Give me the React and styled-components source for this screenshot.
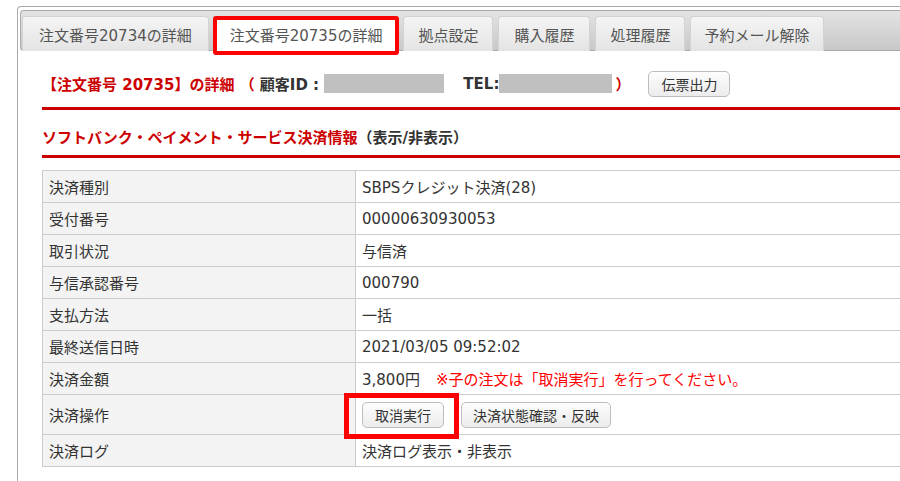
import React from 'react';
import styled, { createGlobalStyle } from 'styled-components';

const GlobalStyle = createGlobalStyle`
  html, body {
    margin: 0;
    padding: 0;
    background: #fff;
    overflow: hidden;
  }
  body {
    font-family: "DejaVu Sans", "Noto Sans CJK JP", sans-serif;
    color: #333;
  }
`;

const Page = styled.div`
  padding: 6px 0 0 17px;
  height: 481px;
  box-sizing: border-box;
`;

const Panel = styled.div`
  border: 1px solid #aaa;
  border-right: none;
  border-bottom: none;
  border-radius: 4px 0 0 0;
  padding: 3px 0 0 2px;
  height: 100%;
  box-sizing: border-box;
`;

const TabBar = styled.div`
  display: flex;
  gap: 5px;
  height: 41px;
  box-sizing: border-box;
  padding: 5px 0 0 1px;
  border: 1px solid #aaa;
  border-right: none;
  border-radius: 4px 0 0 4px;
  background: linear-gradient(#e3e3e3, #c8c8c8);
`;

const Tab = styled.div`
  position: relative;
  height: 35px;
  box-sizing: border-box;
  padding: 0 ${p => p.$pad || 15}px;
  display: flex;
  align-items: center;
  font-size: 15px;
  color: #555;
  border: 1px solid #d3d3d3;
  border-bottom: none;
  border-radius: 4px 4px 0 0;
  background: ${p => (p.$active ? '#fff' : 'linear-gradient(#f4f4f4, #e4e4e4)')};
  white-space: nowrap;

  ${p =>
    p.$active &&
    `
    &::after {
      content: '';
      position: absolute;
      left: -2px;
      right: -2px;
      top: -1px;
      bottom: -4px;
      border: 4px solid #ff0000;
      border-radius: 3px;
    }
  `}
`;

const Content = styled.div`
  padding: 0 0 0 22px;
`;

const Header = styled.div`
  display: flex;
  align-items: center;
  height: 59px;
  padding-top: 9px;
  box-sizing: border-box;
  border-bottom: 3px solid #cc0000;
`;

const Title = styled.span`
  font-size: 15px;
  font-weight: bold;
  color: ${p => p.$color || '#cc0000'};
  margin-left: ${p => p.$ml || 0}px;
  white-space: nowrap;
`;

const Masked = styled.span`
  display: inline-block;
  width: ${p => p.$w}px;
  height: 19px;
  background: #c0c0c0;
`;

const Button = styled.button`
  position: relative;
  height: 26px;
  padding: 0 ${p => p.$pad || 12}px;
  font-family: "Noto Sans CJK JP", sans-serif;
  font-size: 14px;
  color: #333;
  background: linear-gradient(#fdfdfd, #ececec);
  border: 1px solid #bcbcc4;
  border-radius: 5px;
  margin-left: ${p => p.$ml || 0}px;
  white-space: nowrap;

  ${p =>
    p.$marked &&
    `
    &::after {
      content: '';
      position: absolute;
      left: -19px;
      right: -16px;
      top: -10px;
      bottom: -12px;
      border: 5px solid #ff0000;
    }
  `}
`;

const SectionHead = styled.div`
  height: 48px;
  padding-top: 8px;
  box-sizing: border-box;
  display: flex;
  align-items: center;
  border-bottom: 3px solid #cc0000;
  margin-bottom: 12px;
`;

const Table = styled.table`
  border-collapse: collapse;
  width: 900px;
  font-size: 15px;
`;

const Row = styled.tr`
  height: ${p => (p.$tall ? 40 : 32)}px;
`;

const Label = styled.td`
  width: 313px;
  box-sizing: border-box;
  padding: 0 6px;
  background: #f2f3f2;
  border: 1px solid #ccc;
  color: #333;
`;

const Value = styled.td`
  padding: 0 6px;
  border: 1px solid #ccc;
  color: #333;
  white-space: nowrap;
`;

const Note = styled.span`
  color: #ff0000;
  margin-left: 16px;
`;

const tabs = [
  { label: '注文番号20734の詳細', pad: 16 },
  { label: '注文番号20735の詳細', active: true },
  { label: '拠点設定', pad: 14 },
  { label: '購入履歴' },
  { label: '処理履歴', pad: 14 },
  { label: '予約メール解除', pad: 13 },
];

const rows = [
  ['決済種別', 'SBPSクレジット決済(28)'],
  ['受付番号', '00000630930053'],
  ['取引状況', '与信済'],
  ['与信承認番号', '000790'],
  ['支払方法', '一括'],
  ['最終送信日時', '2021/03/05 09:52:02'],
];

export default function App() {
  return (
    <>
      <GlobalStyle />
      <Page>
        <Panel>
          <TabBar>
            {tabs.map(t => (
              <Tab key={t.label} $active={t.active} $pad={t.pad}>
                {t.label}
              </Tab>
            ))}
          </TabBar>
          <Content>
            <Header>
              <Title>【注文番号 20735】の詳細 （&nbsp;</Title>
              <Title $color="#333">顧客ID :&nbsp;</Title>
              <Masked $w={120} />
              <Title $color="#333" $ml={19}>TEL:</Title>
              <Masked $w={113} />
              <Title $ml={3}>）</Title>
              <Button $ml={18}>伝票出力</Button>
            </Header>
            <SectionHead>
              <Title>ソフトバンク・ペイメント・サービス決済情報</Title>
              <Title $color="#333">（表示/非表示）</Title>
            </SectionHead>
            <Table>
              <tbody>
                {rows.map(([k, v]) => (
                  <Row key={k}>
                    <Label>{k}</Label>
                    <Value>{v}</Value>
                  </Row>
                ))}
                <Row>
                  <Label>決済金額</Label>
                  <Value>
                    3,800円<Note>※子の注文は「取消実行」を行ってください。</Note>
                  </Value>
                </Row>
                <Row $tall>
                  <Label>決済操作</Label>
                  <Value>
                    <Button $marked>取消実行</Button>
                    <Button $ml={17} $pad={11}>決済状態確認・反映</Button>
                  </Value>
                </Row>
                <Row>
                  <Label>決済ログ</Label>
                  <Value>決済ログ表示・非表示</Value>
                </Row>
              </tbody>
            </Table>
          </Content>
        </Panel>
      </Page>
    </>
  );
}
